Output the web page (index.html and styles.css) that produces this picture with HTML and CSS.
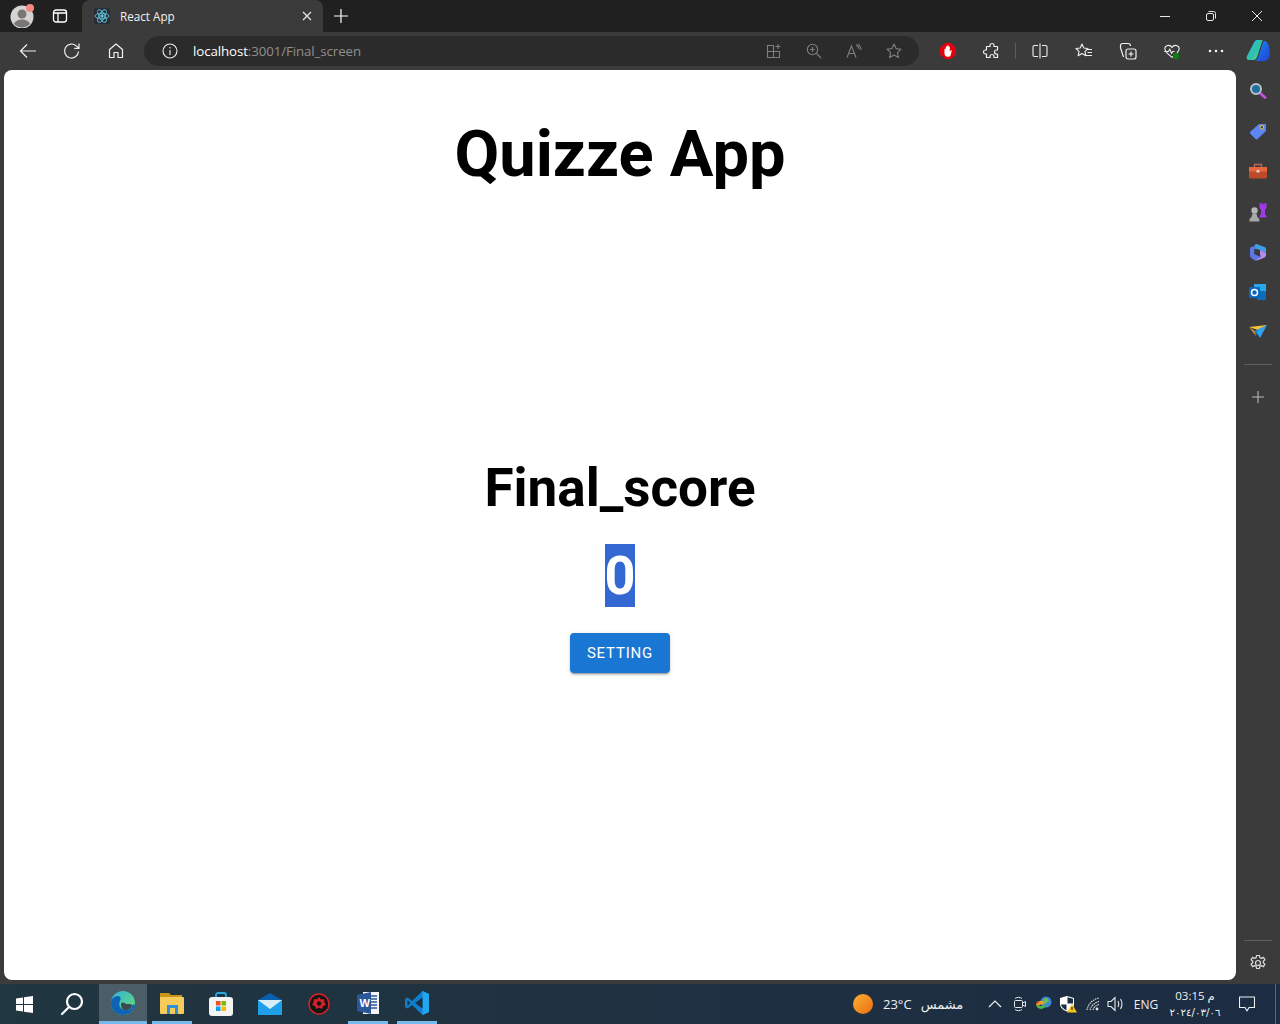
FILE: index.html
```html
<!DOCTYPE html>
<html lang="en">
<head>
<meta charset="utf-8">
<title>React App</title>
<link rel="stylesheet" href="styles.css">
</head>
<body>
<header class="titlebar">
  <div class="slot-avatar">
    <svg width="26" height="26" viewBox="0 0 26 26"><circle cx="12" cy="15" r="11.5" fill="#d6d3d0"/><circle cx="12" cy="12" r="4.5" fill="#777"/><path d="M4 22c2-6 14-6 16 0a11 11 0 0 1-16 0z" fill="#777"/><circle cx="20" cy="6" r="4" fill="#f28b82"/></svg>
  </div>
  <div class="slot-tabs">
    <svg width="16" height="16" viewBox="0 0 16 16" fill="none" stroke="#fff" stroke-width="1.3"><rect x="1.500" y="2" width="13" height="12" rx="2.500"/><path d="M1.500 5h13M6 5v9"/></svg>
  </div>
  <div class="tab">
    <svg class="favicon" width="16" height="16" viewBox="0 0 16 16" fill="none" stroke="#5fc3dc" stroke-width=".9"><rect width="16" height="16" rx="2" fill="#282c34" stroke="none"/><ellipse cx="8" cy="8" rx="7" ry="2.800"/><ellipse cx="8" cy="8" rx="7" ry="2.800" transform="rotate(60 8 8)"/><ellipse cx="8" cy="8" rx="7" ry="2.800" transform="rotate(120 8 8)"/><circle cx="8" cy="8" r="1.300" fill="#5fc3dc"/></svg>
    <span class="tab-title">React App</span>
    <svg class="tab-close" width="12" height="12" viewBox="0 0 12 12" stroke="#e8e8e8" stroke-width="1.200"><path d="M2 2l8 8M10 2l-8 8"/></svg>
  </div>
  <div class="slot-new">
    <svg width="16" height="16" viewBox="0 0 16 16" stroke="#fff" stroke-width="1.200"><path d="M8 1v14M1 8h14"/></svg>
  </div>
  <div class="window-controls">
    <div class="win-btn"><svg width="12" height="12" viewBox="0 0 12 12" stroke="#e8e8e8"><path d="M1 6.500h10"/></svg></div>
    <div class="win-btn"><svg width="12" height="12" viewBox="0 0 12 12" fill="none" stroke="#e8e8e8"><rect x="1.500" y="3.500" width="7" height="7" rx="1.500"/><path d="M3.500 1.500h5a2 2 0 0 1 2 2v5"/></svg></div>
    <div class="win-btn"><svg width="12" height="12" viewBox="0 0 12 12" stroke="#e8e8e8"><path d="M1 1l10 10M11 1L1 11"/></svg></div>
  </div>
</header>

<nav class="toolbar">
  <div class="tool"><svg width="18" height="18" viewBox="0 0 18 18" fill="none" stroke="#f0f0f0" stroke-width="1.200"><path d="M17 9H1.500M8 2.500L1.500 9 8 15.500"/></svg></div>
  <div class="tool"><svg width="18" height="18" viewBox="0 0 18 18" fill="none" stroke="#f0f0f0" stroke-width="1.200"><path d="M15.500 9.500a7 7 0 1 1-2.200-5.600L16 6.200M16 1.500v4.800h-4.800"/></svg></div>
  <div class="tool"><svg width="18" height="18" viewBox="0 0 18 18" fill="none" stroke="#f0f0f0" stroke-width="1.200"><path d="M2.500 15.500V7.500L9 2l6.500 5.500v8h-4.500v-5H7v5z" stroke-linejoin="round"/></svg></div>
  <div class="address">
    <svg class="info" width="16" height="16" viewBox="0 0 16 16" fill="none" stroke="#eee" stroke-width="1.100"><circle cx="8" cy="8" r="7"/><path d="M8 7v5M8 4v1.500"/></svg>
    <span class="url"><span class="host">localhost</span>:3001/Final_screen</span>
    <div class="addr-icons">
      <div class="addr-icon"><svg width="16" height="16" viewBox="0 0 16 16" fill="none" stroke="#7f7f7f" stroke-width="1.100"><path d="M8 2.500H1.500v12h12V8M1.500 8.500h12M7.500 2.500v12M12 1v5M9.500 3.500h5"/></svg></div>
      <div class="addr-icon"><svg width="16" height="16" viewBox="0 0 16 16" fill="none" stroke="#7f7f7f" stroke-width="1.100"><circle cx="6.500" cy="6.500" r="5.200"/><path d="M10.500 10.500l4.500 4.500M6.500 4v5M4 6.500h5"/></svg></div>
      <div class="addr-icon"><svg width="16" height="16" viewBox="0 0 16 16" fill="none" stroke="#7f7f7f" stroke-width="1.100"><path d="M1 14.500L5.500 3 10 14.500M2.700 10.500h5.600M10 2a5 5 0 0 1 3 4M11.500 1a7 7 0 0 1 3.500 6"/></svg></div>
      <div class="addr-icon"><svg width="16" height="16" viewBox="0 0 16 16" fill="none" stroke="#7f7f7f" stroke-width="1.100"><path d="M8 1l2.100 4.600 5 .6-3.700 3.400 1 5L8 12.100l-4.400 2.500 1-5L.9 6.200l5-.6z" stroke-linejoin="round"/></svg></div>
    </div>
  </div>
  <div class="tool tool-first"><svg width="16" height="16" viewBox="0 0 16 16"><path d="M5 0h6l5 5v6l-5 5H5l-5-5V5z" fill="#e3000f"/><path d="M4.500 9V6a.7.7 0 0 1 1.300 0V3.800a.7.7 0 0 1 1.300 0V3a.7.7 0 0 1 1.400 0v.8a.7.7 0 0 1 1.300 0v5l.9-1.200c.5-.6 1.300 0 1 .5L10.600 12.500c-.6.800-1.200 1.200-2.200 1.200H7.500c-1.800 0-3-1.400-3-3.300z" fill="#fff"/></svg></div>
  <div class="tool"><svg width="18" height="18" viewBox="0 0 18 18" fill="none" stroke="#f0f0f0" stroke-width="1.200"><path d="M7 3.500a2 2 0 0 1 4 0V4.500h3.500V8h-1a2 2 0 0 0 0 4h1v3.500H11v-1a2 2 0 0 0-4 0v1H3.500V12h-1a2 2 0 0 1 0-4h1V4.500H7z" stroke-linejoin="round"/></svg></div>
  <div class="tool-sep"></div>
  <div class="tool tool-after-sep"><svg width="16" height="16" viewBox="0 0 16 16" fill="none" stroke="#f0f0f0" stroke-width="1.100"><path d="M6 2.500H2.500a1.500 1.500 0 0 0-1.500 1.500v8a1.500 1.500 0 0 0 1.500 1.500H6M10 2.500h3.500a1.500 1.500 0 0 1 1.500 1.500v8a1.500 1.500 0 0 1-1.500 1.500H10M8 .5v15"/></svg></div>
  <div class="tool"><svg width="18" height="18" viewBox="0 0 18 18" fill="none" stroke="#f0f0f0" stroke-width="1.100"><path d="M7 2l1.800 4 4.200.5-3 2.900.8 4.300L7 11.500l-3.800 2.200.8-4.300-3-2.900 4.200-.5zM12 7.500h5M12.500 10.500h4.500M11 13.500h6" stroke-linejoin="round"/></svg></div>
  <div class="tool"><svg width="18" height="18" viewBox="0 0 18 18" fill="none" stroke="#f0f0f0" stroke-width="1.200"><rect x="7" y="7" width="10" height="10" rx="2" fill="#3b3b3b"/><path d="M12 9.500v5M9.500 12h5M4.500 15L1.500 6V3.500A2 2 0 0 1 3.500 1.500H9a2.500 2.500 0 0 1 2.500 2.500"/></svg></div>
  <div class="tool"><svg width="18" height="17" viewBox="0 0 20 18" fill="none" stroke="#f0f0f0" stroke-width="1.200"><path d="M10 4.500C8 1 2 1.500 2 6c0 3 3.500 6 8 9.500 2-1.500 4-3 5.500-4.800C17 9 18 7.500 18 6c0-4.500-6-5-8-1.500zM1.500 9H6l1.500-2.500 2 4.500 1.300-2h2"/><circle cx="14.500" cy="14" r="3.500" fill="#107c10" stroke="none"/></svg></div>
  <div class="tool"><svg width="16" height="4" viewBox="0 0 16 4" fill="#f0f0f0"><circle cx="2" cy="2" r="1.300"/><circle cx="8" cy="2" r="1.300"/><circle cx="14" cy="2" r="1.300"/></svg></div>
  <div class="tool-copilot"><svg width="24" height="24" viewBox="0 0 24 24"><defs><linearGradient id="cp1" x1="0" y1="0" x2="1" y2="1"><stop offset="0" stop-color="#2bb8e6"/><stop offset=".6" stop-color="#2ec4a6"/><stop offset="1" stop-color="#7fe07a"/></linearGradient><linearGradient id="cp2" x1="0" y1="0" x2="1" y2="1"><stop offset="0" stop-color="#1a8df0"/><stop offset="1" stop-color="#2040d8"/></linearGradient></defs><path d="M18 2c2.500 0 4 1.500 4.800 5l1 6c.5 4-1 8-5 9H8c2 0 3-1 4-3.500L17 4c.3-1 .5-2 1-2z" fill="url(#cp2)"/><path d="M8 3.500C9 1.500 10 1 12 1h4c1 0 .5 .5 0 2L11 18c-.8 2-2 3-4 3H3c-2 0-3-1.500-2-4z" fill="url(#cp1)"/></svg></div>
</nav>

<div class="workspace">
  <main class="page">
    <h1 class="app-title">Quizze App</h1>
    <section class="result">
      <h2 class="final-title">Final_score</h2>
      <div class="score-line"><span class="score">0</span></div>
      <button class="setting-btn">SETTING</button>
    </section>
  </main>
  <aside class="sidebar">
    <div class="side-icon"><svg width="18" height="18" viewBox="0 0 18 18"><path d="M11 11l5 4.500" stroke="#c24fd8" stroke-width="3" stroke-linecap="round"/><circle cx="7" cy="7" r="5" fill="#1f6f9f" stroke="#b9c2c6" stroke-width="2"/></svg></div>
    <div class="side-icon"><svg width="18" height="18" viewBox="0 0 18 18"><path d="M1.500 9.500L9.500 2.500c.5-.5 1-.5 1.500-.5h5c.8 0 1 .5 1 1v5c0 .5 0 1-.5 1.500L8.500 17c-.5.5-1.500.5-2 0L1.500 12c-.7-.7-.7-2 0-2.500z" fill="#5c86f2"/><circle cx="12.800" cy="5.200" r="1.800" fill="#3a4a70" stroke="#f0c838"/></svg></div>
    <div class="side-icon"><svg width="18" height="16" viewBox="0 0 18 16"><path d="M5.500 4V1.500h7V4" fill="none" stroke="#b96a55" stroke-width="1.300"/><rect y="4" width="18" height="11.500" rx="1.500" fill="#bd4a28"/><rect y="4" width="18" height="4.500" fill="#e8663a"/><rect x="7.500" y="7" width="3" height="2.500" rx=".5" fill="#d8d8d8"/></svg></div>
    <div class="side-icon"><svg width="20" height="20" viewBox="0 0 20 20"><circle cx="6.500" cy="8.500" r="3.200" fill="#b5b5b5"/><path d="M4.500 11.500h4l.8 3.500 2 2v2.500H1.500V17l2-2z" fill="#a8a8a8"/><path d="M11.500 1h2v1.500h1V1h1v1.500h1V1h2v5l-1.500 1.500V12l1.500 2v1.500h-7V14l1.500-2V7.500L11.500 6z" fill="#a238e8"/></svg></div>
    <div class="side-icon"><svg width="18" height="18" viewBox="0 0 18 18"><path d="M7.500 1L15.500 4c1 .5 1.500 1 1.500 2v4l-6-3-5.500-1V3c0-1.200 1-2.500 2-2z" fill="#3ba0ea"/><path d="M1 6c0-1 .5-1.800 1.500-2.200L5.500 3v8l6 3-3.500 3c-1 .7-2 .7-3 0L2.500 15C1.500 14.300 1 13.500 1 12.500z" fill="#5a78e6"/><path d="M11 7l6 3v2c0 1-.5 2-1.500 2.500L9.500 17c-1 .5-2 .5-2.500 0l4.500-3-.5-3z" fill="#b78af0"/><path d="M5.500 6L11 7v4.500L5.500 11z" fill="#3b3b3b"/></svg></div>
    <div class="side-icon"><svg width="18" height="18" viewBox="0 0 18 18"><rect x="5" y="1" width="12" height="8" fill="#28a8ea"/><rect x="8" y="8" width="9" height="9" rx="1" fill="#0f6cbd"/><rect y="4" width="11" height="11" rx="1" fill="#0a66c2"/><circle cx="5.500" cy="9.500" r="3" fill="none" stroke="#fff" stroke-width="1.500"/></svg></div>
    <div class="side-icon"><svg width="18" height="16" viewBox="0 0 18 16"><path d="M0 3l18-2-9 5z" fill="#f5c33b"/><path d="M0 3l5.500 4L7 12z" fill="#f29a2e"/><path d="M18 1L6.500 6.500 11 14z" fill="#2ea3ee"/><path d="M5.500 7L9 6l-2 6z" fill="#1c7fd0"/></svg></div>
    <div class="side-sep"></div>
    <div class="side-plus"><svg width="14" height="14" viewBox="0 0 14 14" stroke="#b8b8b8" stroke-width="1.100"><path d="M7 1v12M1 7h12"/></svg></div>
    <div class="side-spacer"></div>
    <div class="side-sep side-sep-bottom"></div>
    <div class="side-gear"><svg width="18" height="18" viewBox="0 0 18 18" fill="none" stroke="#dcdcdc" stroke-width="1.200"><circle cx="9" cy="9" r="2.500"/><path d="M7.600 1.500h2.800l.5 2.200 1.500.7 2-1 1.500 2.300-1.600 1.500v1.600l1.600 1.500-1.500 2.300-2-1-1.500.7-.5 2.200H7.600l-.5-2.200-1.500-.7-2 1-1.500-2.300 1.600-1.500V7.200L2.100 5.700l1.500-2.300 2 1 1.500-.7z" stroke-linejoin="round"/></svg></div>
  </aside>
</div>

<footer class="taskbar">
  <div class="tb-app"><svg width="17" height="17" viewBox="0 0 17 17" fill="#fff"><path d="M0 2.400L7 1.400V8H0zM8 1.300L17 0v8H8zM0 9h7v6.600L0 14.600zM8 9h9v8l-9-1.300z"/></svg></div>
  <div class="tb-app"><svg width="24" height="24" viewBox="0 0 24 24" fill="none" stroke="#fff" stroke-width="2.200"><circle cx="14.500" cy="9.500" r="7.500"/><path d="M9 15l-7 7" stroke-linecap="round"/></svg></div>
  <div class="tb-app tb-active"><svg width="26" height="26" viewBox="0 0 26 26"><defs><linearGradient id="edg" x1="0" y1="0" x2="1" y2="1"><stop offset="0" stop-color="#2fb4e0"/><stop offset="1" stop-color="#6fdc6a"/></linearGradient></defs><circle cx="13" cy="13" r="12" fill="url(#edg)"/><path d="M25 15c-1 6-6 10-12 10C6 25 1 20 1 13c0-4 3-7 7-7 3 0 3 3 2 5-2 4 0 9 6 9 4 0 6-2 6-4 0-1 2-2 3-1z" fill="#0f63b5"/><path d="M16 14c3 0 6 0 6 1 0 3-3 5-6 5-3 0-5-2-5-5s2-3 5-1z" fill="#3b4a52"/></svg></div>
  <div class="tb-app tb-open"><svg width="24" height="22" viewBox="0 0 24 22"><path d="M0 1h9l2 2h11v6H0z" fill="#c9951b"/><rect y="5" width="24" height="17" rx="1" fill="#f5cc5a"/><rect x="7" y="13" width="11" height="9" fill="#2f8fd8"/><rect x="10" y="16" width="5" height="6" fill="#f5cc5a"/></svg></div>
  <div class="tb-app"><svg width="24" height="24" viewBox="0 0 24 24" fill="none"><path d="M7 5V3a2 2 0 0 1 2-2h6a2 2 0 0 1 2 2v2" stroke="#27a9e0" stroke-width="1.800"/><rect y="5" width="24" height="19" rx="3" fill="#f3f3f3"/><rect x="7" y="9" width="4.500" height="4.500" fill="#f25022"/><rect x="12.500" y="9" width="4.500" height="4.500" fill="#7fba00"/><rect x="7" y="14.500" width="4.500" height="4.500" fill="#00a4ef"/><rect x="12.500" y="14.500" width="4.500" height="4.500" fill="#ffb900"/></svg></div>
  <div class="tb-app"><svg width="24" height="22" viewBox="0 0 24 22"><path d="M12 0l12 7H0z" fill="#0a5fb0"/><rect y="7" width="24" height="15" fill="#1f9fe8"/><path d="M0 7h24l-12 9z" fill="#d6eef9"/></svg></div>
  <div class="tb-app"><svg width="22" height="22" viewBox="0 0 22 22"><circle cx="11" cy="11" r="10" fill="#151515" stroke="#d3222a" stroke-width="1.500"/><path d="M11 4l2 2.500 3-.5.500 3.500L18 12l-3 1-1 3-3-1.500L8 16l-1-3-3-1 1.500-2.500L6 6l3 .500z" fill="#d3222a"/><circle cx="11" cy="10.500" r="2.200" fill="#151515"/></svg></div>
  <div class="tb-app tb-open"><svg width="22" height="22" viewBox="0 0 22 22"><path d="M6 0h16v22H6z" fill="#f4f4f4"/><path d="M13 4h7M13 7h7M13 10h7M13 13h7M13 16h7" stroke="#2b579a" stroke-width="1.500"/><path d="M0 3l14-3v22L0 19z" fill="#2b579a"/><text class="word-w" x="2.500" y="14.500">W</text></svg></div>
  <div class="tb-app tb-open"><svg width="24" height="24" viewBox="0 0 24 24"><path d="M17.500 0L24 3v18l-6.500 3L7 14l-4.500 3.500L0 16V8l2.500-1.500L7 10z" fill="#0e7fd0"/><path d="M17.500 0L24 3v18l-6.500 3z" fill="#22a5f1"/><path d="M17.500 6.500V17.500L10 12z" fill="#1e3040"/><path d="M2.500 9v6L5.500 12z" fill="#1e3040"/></svg></div>
  <div class="tray">
    <div class="weather"><span class="sun"></span><span class="temp">23°C</span><span class="cond">مشمس</span></div>
    <div class="tray-icon tray-chevron"><svg width="14" height="8" viewBox="0 0 14 8" fill="none" stroke="#f0f0f0" stroke-width="1.200"><path d="M1 7l6-6 6 6"/></svg></div>
    <div class="tray-icon"><svg width="14" height="16" viewBox="0 0 14 16" fill="none" stroke="#e8e8e8"><rect x="1.500" y="4.500" width="8" height="7" rx="1"/><path d="M9.500 7l3-1.500v5l-3-1.500M2 2.500c2-1.500 5-1.500 7 0M2 13.500c2 1.500 5 1.500 7 0"/></svg></div>
    <div class="tray-icon"><svg width="18" height="16" viewBox="0 0 18 16"><circle cx="11" cy="6" r="5.500" fill="#3d86d8"/><path d="M8 3l4-1 2 3-4 3z" fill="#6bbf4a"/><path d="M1 9a5 5 0 0 1 9-2l-3 2a2 2 0 0 0-3 1z" fill="#e8a028"/><path d="M1 9c1 3 3 4 6 4l7-4-7 1c-3 0-4 0-6-1z" fill="#48b848"/><path d="M1 8c0-1 1-3 2-3l1 2z" fill="#d83a30"/></svg></div>
    <div class="tray-icon"><svg width="18" height="18" viewBox="0 0 18 18"><path d="M8 1l7 2v6c0 3.500-3 6-7 7.500C4 15 1 12.500 1 9V3z" fill="#fff"/><path d="M8.500 2.200L14 3.800V8.500H8.500zM7.500 9.500H2c.3 2.500 2.500 4.500 5.500 5.800z" fill="#1e3040"/><path d="M13 9l5 8.500H8z" fill="#f8c51c"/><path d="M13 12v3" stroke="#222" stroke-width="1.100"/></svg></div>
    <div class="tray-icon tray-wifi"><svg width="16" height="14" viewBox="0 0 16 14" fill="none" stroke="#e8e8e8" stroke-width="1.100"><path d="M2 13C3 7 8 2 14 1M5 13c1-4 4-7 9-8.500M8 13c.5-2.500 2.500-4.500 6-5.500" stroke-dasharray="1.500 .8"/><circle cx="12" cy="12" r="1.400" fill="#e8e8e8" stroke="none"/></svg></div>
    <div class="tray-icon tray-sound"><svg width="18" height="16" viewBox="0 0 18 16" fill="none" stroke="#e8e8e8" stroke-width="1.100"><path d="M1 5.500h3l4-4v13l-4-4H1zM11 5c1 1.800 1 4.200 0 6M13.500 3c1.800 3 1.800 7 0 10"/></svg></div>
    <span class="lang">ENG</span>
    <div class="clock"><span class="time">03:15 م</span><span class="date">٢٠٢٤/٠٣/٠٦</span></div>
    <div class="notif"><svg width="16" height="16" viewBox="0 0 16 16" fill="none" stroke="#f0f0f0" stroke-width="1.100"><path d="M.5 1h15v10.500H10l-2 3.500-2-3.500H.5z" stroke-linejoin="round"/></svg></div>
    <div class="show-desktop"></div>
  </div>
</footer>
</body>
</html>
```
FILE: styles.css
```css
* { box-sizing: border-box; }
html, body { margin: 0; height: 100%; }
body {
  width: 1280px;
  height: 1024px;
  overflow: hidden;
  background: #3b3b3b;
  font-family: "Open Sans", "Noto Sans", "DejaVu Sans", sans-serif;
  display: flex;
  flex-direction: column;
}
svg { display: block; flex: none; }

.titlebar { height: 32px; background: #202020; display: flex; align-items: center; flex: none; }
.slot-avatar { width: 38px; padding-left: 10px; padding-bottom: 2px; }
.slot-tabs { width: 44px; display: flex; justify-content: center; }
.tab {
  width: 241px; height: 32px; background: #3b3b3b; border-radius: 8px 8px 0 0;
  display: flex; align-items: center; padding: 0 10px 0 12px;
}
.favicon { margin-right: 10px; }
.tab-title { flex: 1; font-size: 11.700px; color: #f0f0f0; padding-bottom: 1px; }
.slot-new { width: 36px; display: flex; justify-content: center; }
.window-controls { margin-left: auto; display: flex; }
.win-btn { width: 46px; height: 32px; display: flex; align-items: center; justify-content: center; }

.toolbar { height: 38px; display: flex; align-items: center; padding-left: 6px; flex: none; }
.tool { width: 44px; height: 34px; display: flex; align-items: center; justify-content: center; }
.address {
  width: 775px; height: 30px; margin-left: 6px; border-radius: 15px; background: #2b2b2b;
  display: flex; align-items: center; padding-left: 18px;
}
.info { margin-right: 15px; }
.url { font-size: 13.300px; color: #8f8f8f; letter-spacing: -.1px; }
.host { color: #fff; }
.addr-icons { margin-left: auto; display: flex; padding-right: 5px; }
.addr-icon { width: 40px; display: flex; justify-content: center; }
.tool-first { margin-left: 7px; }
.tool-sep { width: 1px; height: 16px; background: #5c5c5c; margin-left: 1px; }
.tool-after-sep { margin-left: 2px; }
.tool-copilot { width: 40px; display: flex; justify-content: center; }

.workspace { height: 910px; display: flex; flex: none; }
.page {
  width: 1232px; margin-left: 4px; height: 910px; background: #fff; border-radius: 8px;
  font-family: Roboto, sans-serif; text-align: center; color: #000;
}
.app-title { font-size: 65px; font-weight: 700; margin: 46px 0 0; line-height: 76px; }
.result { margin-top: 265px; display: flex; flex-direction: column; align-items: center; }
.final-title { font-size: 53px; font-weight: 700; margin: 0; line-height: 62px; }
.score-line { margin-top: 25px; height: 63px; }
.score { display: block; font-size: 54px; font-weight: 700; line-height: 63px; background: #3367d1; color: #fff; }
.setting-btn {
  margin-top: 26px; width: 100px; height: 40px; border: 0; border-radius: 4px; background: #1976d2; color: #fff;
  font-family: Roboto, sans-serif; font-size: 15px; font-weight: 400; letter-spacing: .8px;
  box-shadow: 0 3px 1px -2px rgba(0,0,0,.2), 0 2px 2px rgba(0,0,0,.14), 0 1px 5px rgba(0,0,0,.12);
}

.sidebar { width: 44px; display: flex; flex-direction: column; align-items: center; padding-top: 1px; }
.side-icon { width: 44px; height: 40.200px; display: flex; align-items: center; justify-content: center; }
.side-sep { width: 28px; height: 1px; background: #5f5f5f; margin-top: 12px; flex: none; }
.side-plus { height: 14px; margin-top: 25px; }
.side-spacer { flex: 1; }
.side-sep-bottom { margin-top: 0; }
.side-gear { height: 18px; margin: 13px 0 8px; }

.taskbar {
  margin-top: 4px; height: 40px; background: linear-gradient(90deg, #203640, #1c2c42); display: flex; align-items: center; flex: none;
}
.tb-app { width: 48px; height: 40px; display: flex; align-items: center; justify-content: center; flex: none; }
.tb-app:nth-child(n+2) { margin-right: 1px; }
.tb-active { background: #4b5d66; border-bottom: 3px solid #76b9ed; margin-left: 2px; }
.tb-open { border-bottom: 3px solid transparent; background: linear-gradient(#76b9ed, #76b9ed) no-repeat center bottom / 40px 3px; background-origin: border-box; background-clip: border-box; }
.word-w { font-family: "Liberation Sans", sans-serif; font-size: 11px; font-weight: 700; fill: #fff; }

.tray { margin-left: auto; display: flex; align-items: center; height: 40px; color: #f0f0f0; }
.weather { display: flex; align-items: center; width: 130px; }
.sun { width: 20px; height: 20px; border-radius: 50%; background: linear-gradient(135deg, #f9b233, #ee6c12); margin-right: 10px; }
.temp { font-size: 13px; margin-right: 9px; }
.cond { font-size: 13px; font-family: "DejaVu Sans", sans-serif; }
.tray-icon { width: 24px; display: flex; justify-content: center; }
.tray-chevron { margin-right: 1px; }
.tray-wifi { margin-left: 1px; }
.tray-sound { margin-left: -1px; }
.lang { font-size: 12px; width: 34px; text-align: center; margin-left: 1px; }
.clock { width: 64px; display: flex; flex-direction: column; align-items: center; font-size: 11.500px; line-height: 17px; }
.date { font-family: "DejaVu Sans", sans-serif; font-size: 10.300px; }
.notif { width: 40px; margin-right: 8px; display: flex; justify-content: center; }
.show-desktop { width: 1px; height: 40px; background: #5a6a76; margin-right: 4px; }
```
